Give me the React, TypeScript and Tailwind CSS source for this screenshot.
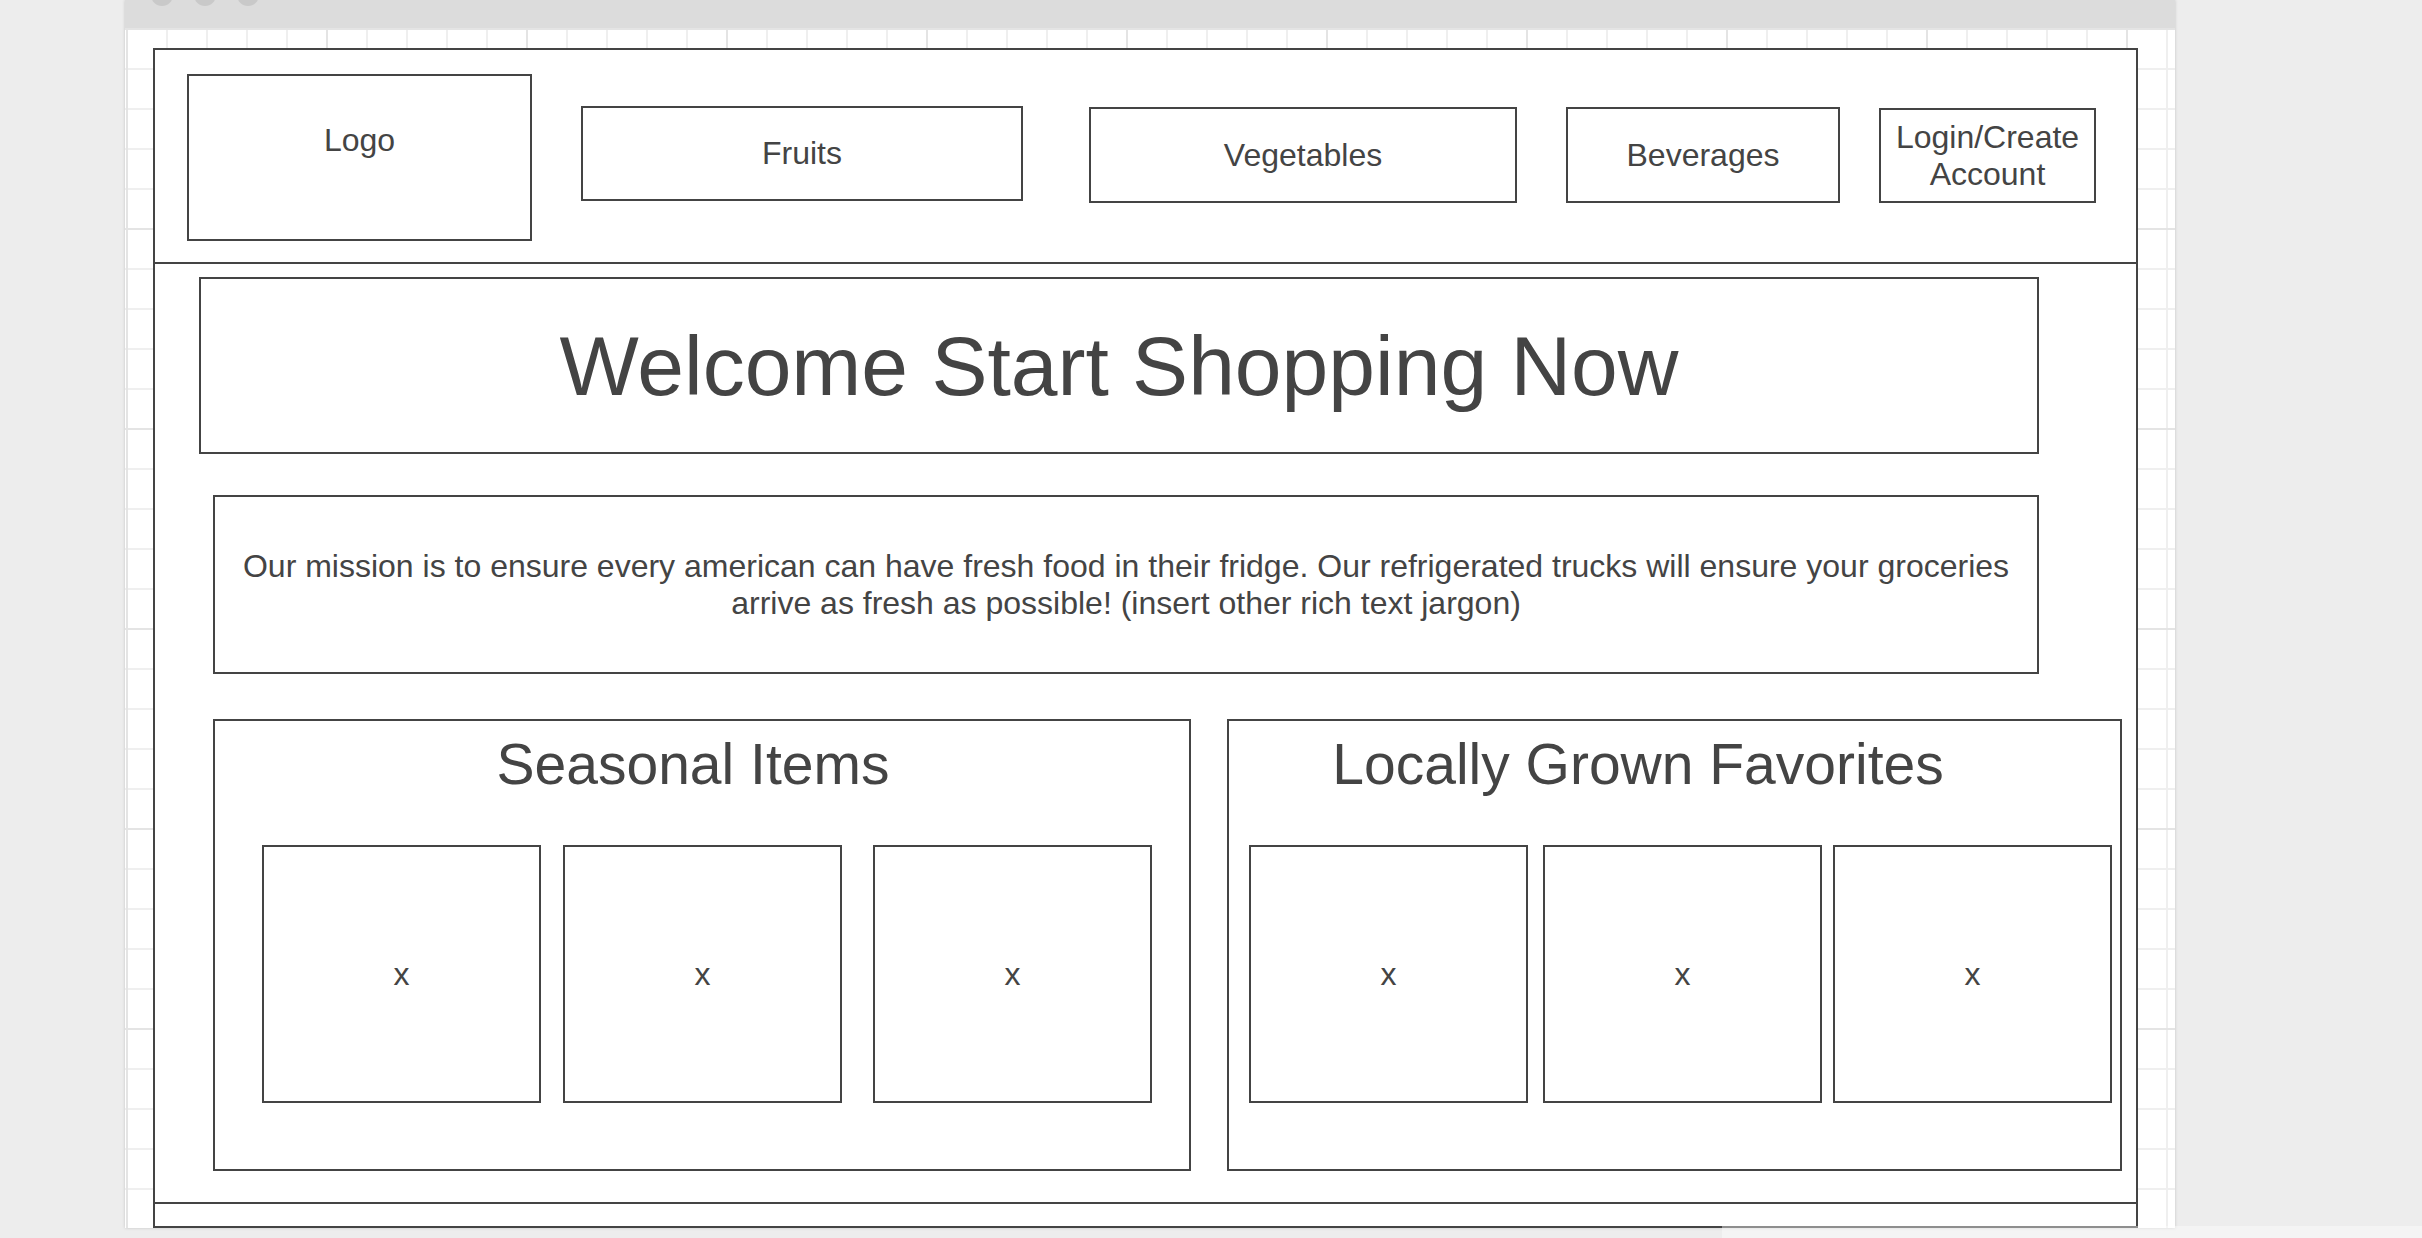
import React from 'react';

const font = { fontFamily: '"Liberation Sans", Arial, sans-serif' };

function Card() {
  return (
    <div className="w-[279px] h-[258px] shrink-0 border-2 border-[#444] flex items-center justify-center text-[32px] leading-[37px] text-[#444]">
      x
    </div>
  );
}

function NavBox({ label, className }: { label: React.ReactNode; className: string }) {
  return (
    <div
      className={`shrink-0 border-2 border-[#444] flex items-center justify-center text-center text-[32px] leading-[37px] text-[#444] ${className}`}
    >
      {label}
    </div>
  );
}

export default function App() {
  return (
    <div className="relative w-[2422px] h-[1238px] overflow-hidden bg-[#ededed]" style={font}>
      {/* Browser window */}
      <div className="ml-[125px] w-[2050px] h-[1228px] flex flex-col bg-white shadow-[0_0_3px_rgba(0,0,0,0.18)]">
        {/* Title bar */}
        <div className="h-[28px] shrink-0 bg-[#dcdcdc] flex items-start gap-[21px] pl-[26px]">
          <span className="w-[22px] h-[22px] -mt-[16px] rounded-full bg-[#c9c9c9]" />
          <span className="w-[22px] h-[22px] -mt-[16px] rounded-full bg-[#c9c9c9]" />
          <span className="w-[22px] h-[22px] -mt-[16px] rounded-full bg-[#c9c9c9]" />
        </div>

        {/* Canvas with grid */}
        <div className="flex-1 pl-[28px] pt-[20px] bg-[linear-gradient(to_right,#e4e4e4_2px,transparent_2px),linear-gradient(to_bottom,#e4e4e4_2px,transparent_2px),linear-gradient(to_right,#efefef_2px,transparent_2px),linear-gradient(to_bottom,#efefef_2px,transparent_2px)] bg-size-[200px_200px,200px_200px,40px_40px,40px_40px] bg-position-[1px_0px]">
          {/* Page frame */}
          <div className="w-[1985px] h-[1180px] border-2 border-[#444] bg-white flex flex-col text-[#444]">
            {/* Header */}
            <div className="h-[214px] shrink-0 border-b-2 border-[#444] flex items-start">
              <div className="ml-[32px] mt-[24px] w-[345px] h-[167px] shrink-0 border-2 border-[#444] pt-[46px] text-center text-[32px] leading-[37px]">
                Logo
              </div>
              <NavBox label="Fruits" className="ml-[49px] mt-[56px] w-[442px] h-[95px]" />
              <NavBox label="Vegetables" className="ml-[66px] mt-[57px] w-[428px] h-[96px]" />
              <NavBox label="Beverages" className="ml-[49px] mt-[57px] w-[274px] h-[96px]" />
              <NavBox
                label={
                  <>
                    Login/Create
                    <br />
                    Account
                  </>
                }
                className="ml-[39px] mt-[58px] w-[217px] h-[95px]"
              />
            </div>

            {/* Body */}
            <div className="flex-1 flex flex-col">
              <div className="ml-[44px] mt-[13px] w-[1840px] h-[177px] shrink-0 border-2 border-[#444] flex items-center justify-center text-[84px] leading-[96px]">
                Welcome Start Shopping Now
              </div>

              <div className="ml-[58px] mt-[41px] w-[1826px] h-[179px] shrink-0 border-2 border-[#444] flex items-center justify-center px-[10px] text-center text-[32px] leading-[37px]">
                Our mission is to ensure every american can have fresh food in their fridge. Our refrigerated trucks will
                ensure your groceries arrive as fresh as possible! (insert other rich text jargon)
              </div>

              <div className="mt-[45px] flex">
                <div className="ml-[58px] w-[978px] h-[452px] shrink-0 border-2 border-[#444] flex flex-col">
                  <div className="pt-[11px] pr-[18px] text-center text-[57px] leading-[65px]">Seasonal Items</div>
                  <div className="mt-[48px] flex">
                    <div className="ml-[47px]">
                      <Card />
                    </div>
                    <div className="ml-[22px]">
                      <Card />
                    </div>
                    <div className="ml-[31px]">
                      <Card />
                    </div>
                  </div>
                </div>

                <div className="ml-[36px] w-[895px] h-[452px] shrink-0 border-2 border-[#444] flex flex-col">
                  <div className="pt-[11px] pr-[73px] text-center text-[57px] leading-[65px]">Locally Grown Favorites</div>
                  <div className="mt-[48px] flex">
                    <div className="ml-[20px]">
                      <Card />
                    </div>
                    <div className="ml-[15px]">
                      <Card />
                    </div>
                    <div className="ml-[11px]">
                      <Card />
                    </div>
                  </div>
                </div>
              </div>
            </div>

            {/* Footer */}
            <div className="h-[24px] shrink-0 border-t-2 border-[#444]" />
          </div>
        </div>
      </div>

      {/* Faded strip over the bottom edge */}
      <div className="absolute left-[1722px] right-0 top-[1226px] bottom-0 bg-white/40" />
    </div>
  );
}
